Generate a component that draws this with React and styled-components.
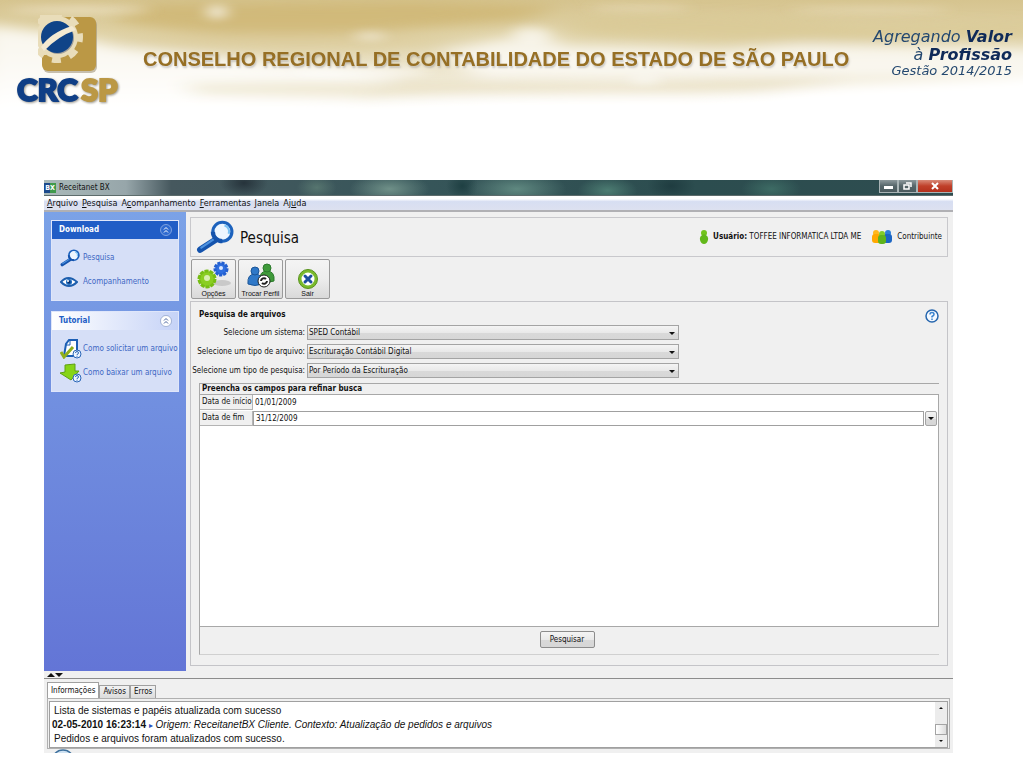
import React, { useState } from 'react'
import styled, { createGlobalStyle, css } from 'styled-components'

const GlobalStyle = createGlobalStyle`
*{
    box-sizing:border-box;
}
body{
    margin:0;
    background:white;
    color:#111;
    font-family:"DejaVu Sans Condensed", Tahoma, "Liberation Sans", sans-serif;
    font-size:8px;
    line-height:12px;
}
button, input, select{
    font:inherit;
    color:inherit;
    margin:0;
    padding:0;
}
a{
    color:inherit;
    text-decoration:none;
}
`

const menus = [
    ['', 'A', 'rquivo'],
    ['', 'P', 'esquisa'],
    ['A', 'c', 'ompanhamento'],
    ['', 'F', 'erramentas'],
    ['', 'J', 'anela'],
    ['Aj', 'u', 'da'],
]

const filters = [
    { id: 'sistema', label: 'Selecione um sistema:', value: 'SPED Contábil' },
    { id: 'tipo-arquivo', label: 'Selecione um tipo de arquivo:', value: 'Escrituração Contábil Digital' },
    { id: 'tipo-pesquisa', label: 'Selecione um tipo de pesquisa:', value: 'Por Período da Escrituração' },
]

const tabs = ['Informações', 'Avisos', 'Erros']

//Banner
const BannerClouds = () => (
    <Clouds viewBox="0 0 1023 120" preserveAspectRatio="none" aria-hidden="true">
        <defs>
            <linearGradient id="sand" x1="0" y1="0" x2="0" y2="1">
                <stop offset="0" stopColor="#d6c48f" />
                <stop offset="0.25" stopColor="#dfd1a4" />
                <stop offset="0.55" stopColor="#ebe3c9" />
                <stop offset="0.8" stopColor="#faf7ee" />
                <stop offset="1" stopColor="#fff" />
            </linearGradient>
            <filter id="soft" x="-20%" y="-60%" width="140%" height="220%">
                <feGaussianBlur stdDeviation="12 6" />
            </filter>
            <filter id="spots" x="-20%" y="-60%" width="140%" height="220%">
                <feGaussianBlur stdDeviation="8 4" />
            </filter>
        </defs>
        <rect width="1023" height="120" fill="url(#sand)" />
        <g filter="url(#soft)">
            <path d="M-20 24 L60 34 L120 48 L210 58 L330 68 L400 78 L300 130 L-20 130Z" fill="#fff" opacity="0.8" />
            <path d="M110 20 Q240 46 400 30 L520 20 L560 6 L420 2 L150 4Z" fill="#cdb26c" opacity="0.7" />
            <path d="M100 36 Q220 56 380 50 L480 40 L400 34 L200 34Z" fill="#dccb98" opacity="0.7" />
            <path d="M440 52 L545 30 L560 46 L640 48 L720 52 L800 44 L1060 50 L1060 76 L480 78Z" fill="#fff" opacity="0.7" />
            <path d="M560 20 Q700 8 860 26 L1060 22 L1060 34 L860 42 Q700 44 590 34Z" fill="#d9c994" opacity="0.7" />
            <path d="M180 84 Q420 78 620 84 Q760 76 850 78 L760 92 Q480 92 360 98 L200 94Z" fill="#e2d5ae" opacity="0.5" />
            <path d="M-20 106 L300 106 L480 98 L700 98 L860 86 L1060 76 L1060 140 L-20 140Z" fill="#fff" />
        </g>
        <g filter="url(#spots)">
            <ellipse cx="80" cy="10" rx="70" ry="3" fill="#f2e9d0" opacity="0.8" />
            <ellipse cx="217" cy="12" rx="10" ry="7" fill="#fff" opacity="0.7" />
            <ellipse cx="370" cy="36" rx="16" ry="4" fill="#fff" opacity="0.5" />
            <ellipse cx="530" cy="34" rx="18" ry="7" fill="#fff" opacity="0.5" />
            <ellipse cx="640" cy="8" rx="50" ry="2" fill="#f2e9d0" opacity="0.7" />
            <ellipse cx="870" cy="10" rx="80" ry="2" fill="#f2e9d0" opacity="0.7" />
            <ellipse cx="360" cy="72" rx="70" ry="4" fill="#fff" opacity="0.7" />
            <ellipse cx="645" cy="80" rx="16" ry="4" fill="#fff" opacity="0.6" />
        </g>
    </Clouds>
)

const CrcLogo = () => (
    <Logo width="108" height="100" viewBox="0 0 108 100" role="img" aria-label="CRCSP">
        <defs>
            <clipPath id="plate"><rect x="22" y="0" width="60" height="58" /></clipPath>
        </defs>
        <rect x="27" y="4" width="54" height="54" rx="6" fill="#8f8263" opacity="0.5" />
        <rect x="26" y="2" width="54" height="54" rx="6" fill="#bb9845" />
        <g clipPath="url(#plate)">
            <circle cx="41" cy="22" r="21" fill="#e9ddba" />
            <circle cx="41" cy="22" r="23" fill="none" stroke="#e9ddba" strokeWidth="6" strokeDasharray="9 9" strokeDashoffset="4" />
            <path d="M24 0 H46 L30 12 V40 H24Z" fill="#e9ddba" />
        </g>
        <circle cx="42" cy="23" r="16" fill="#6f7484" opacity="0.6" />
        <circle cx="41" cy="22" r="16" fill="#0f4488" />
        <path d="M25 32 Q34 18 56 11 L60 15 Q42 21 28 36Z" fill="#f3ead2" />
        <LogoText x="1" y="86" fill="#103f86" stroke="#103f86">CRC</LogoText>
        <LogoText x="65" y="86" fill="#bb9845" stroke="#bb9845">SP</LogoText>
    </Logo>
)

//Icons
const Magnifier = ({ size }) => (
    <svg width={size} height={size} viewBox="0 0 36 32" aria-hidden="true">
        <path d="M18 19 L4 28" stroke="#1453ad" strokeWidth="6" strokeLinecap="round" />
        <path d="M17 18 L5 26" stroke="#4d92e0" strokeWidth="2" strokeLinecap="round" />
        <circle cx="25" cy="11" r="9" fill="#edf6ff" stroke="#1c62bd" strokeWidth="3" />
        <path d="M16 11 A9 9 0 0 0 25 20" fill="none" stroke="#1453ad" strokeWidth="4" />
        <path d="M27 5 A6 6 0 0 1 31 13" fill="none" stroke="#7cc3f5" strokeWidth="2" />
    </svg>
)

const EyeIcon = () => (
    <svg width="18" height="14" viewBox="0 0 18 14" aria-hidden="true">
        <path d="M1 7 Q8 -1 17 7 Q9 15 1 7Z" fill="#fff" stroke="#1e5fae" strokeWidth="2" />
        <circle cx="9" cy="7" r="3" fill="#1e6cc0" />
        <circle cx="9" cy="7" r="1.5" fill="#0c2f66" />
        <circle cx="8" cy="6" r="1" fill="#fff" />
    </svg>
)

const HelpMark = ({ x, y, r }) => (
    <g>
        <circle cx={x} cy={y} r={r} fill="#eef5ff" stroke="#2a66b8" />
        <path d={`M${x - 1.5} ${y - 1} q0 -1.5 1.5 -1.5 t1.5 1.5 q0 1 -1.5 1.5 v0.8 M${x} ${y + 2} v0.8`} fill="none" stroke="#2a66b8" />
    </g>
)

const RequestIcon = () => (
    <svg width="22" height="20" viewBox="0 0 22 20" aria-hidden="true">
        <path d="M9 1 H17 V17 H4 L6 5Z" fill="#fff" stroke="#1d5fb5" strokeWidth="2" />
        <path d="M10 1 V6 H6" fill="none" stroke="#1d5fb5" />
        <path d="M1 13 L4 18 L13 8" fill="none" stroke="#8fae1c" strokeWidth="3" />
        <HelpMark x={17} y={15} r={4} />
    </svg>
)

const DownloadIcon = () => (
    <svg width="22" height="20" viewBox="0 0 22 20" aria-hidden="true">
        <path d="M5 2 L15 1 V8 L19 8 L11 17 L0 10 L5 9Z" fill="#86d416" stroke="#5ea012" />
        <HelpMark x={17} y={15} r={4} />
    </svg>
)

const GearsIcon = () => (
    <svg width="36" height="30" viewBox="0 0 36 30" aria-hidden="true">
        <ellipse cx="26" cy="23" rx="9" ry="3" fill="#c9c9c9" />
        <circle cx="25" cy="9" r="6" fill="#2f6fe0" />
        <circle cx="25" cy="9" r="6" fill="none" stroke="#2460d0" strokeWidth="3" strokeDasharray="3 1" />
        <circle cx="25" cy="8" r="2" fill="#dbe8ff" />
        <circle cx="11" cy="19" r="8" fill="#8ace22" />
        <circle cx="11" cy="19" r="8" fill="none" stroke="#76bd14" strokeWidth="3" strokeDasharray="4 1" />
        <circle cx="11" cy="18" r="3" fill="#d9f0b0" />
    </svg>
)

const Person = ({ x, y, fill, edge }) => (
    <g transform={`translate(${x} ${y})`}>
        <path d="M0 18 Q-1 8 7 8 Q15 8 14 18 Q7 21 0 18Z" fill={fill} stroke={edge} />
        <circle cx="7" cy="5" r="4" fill={fill} stroke={edge} />
    </g>
)

const ProfileIcon = () => (
    <svg width="30" height="28" viewBox="0 0 30 28" aria-hidden="true">
        <Person x={14} y={3} fill="#3f9a3a" edge="#2c7a2c" />
        <Person x={2} y={6} fill="#2f78c8" edge="#1c5698" />
        <circle cx="18" cy="21" r="6" fill="#fff" stroke="#222" />
        <path d="M15 21 a3 3 0 0 1 5 -2 M21 21 a3 3 0 0 1 -5 2" fill="none" stroke="#222" strokeWidth="2" />
    </svg>
)

const ExitIcon = () => (
    <svg width="24" height="29" viewBox="0 0 24 29" aria-hidden="true">
        <circle cx="12" cy="19" r="8" fill="#fff" stroke="#7aba2c" strokeWidth="3" />
        <circle cx="12" cy="19" r="9.5" fill="none" stroke="#57921c" />
        <path d="M9 16 L15 22 M15 16 L9 22" stroke="#1e4f9e" strokeWidth="3" strokeLinecap="round" />
    </svg>
)

const UserIcon = () => (
    <svg width="10" height="14" viewBox="0 0 10 14" aria-hidden="true">
        <circle cx="5" cy="3" r="3" fill="#72c41c" />
        <path d="M5 4 Q10 6 9 10 Q8 14 5 14 Q2 14 1 10 Q0 6 5 4Z" fill="#62b81a" />
    </svg>
)

const GroupIcon = () => (
    <svg width="22" height="14" viewBox="0 0 22 14" aria-hidden="true">
        <circle cx="5" cy="3" r="3" fill="#ffb81c" />
        <rect x="1" y="4" width="9" height="9" rx="3" fill="#ffa800" />
        <circle cx="17" cy="3" r="3" fill="#2d7fd8" />
        <rect x="12" y="4" width="9" height="9" rx="3" fill="#1c66c4" />
        <circle cx="11" cy="4" r="3" fill="#82cc2a" />
        <rect x="7" y="5" width="8" height="9" rx="3" fill="#5fb41c" />
    </svg>
)

const HelpIcon = () => (
    <svg width="14" height="14" viewBox="0 0 14 14" aria-hidden="true">
        <circle cx="7" cy="7" r="6" fill="#f4f9ff" stroke="#2666ae" strokeWidth="1.5" />
        <path d="M5 5.5 q0 -2 2 -2 t2 2 q0 1 -2 2 v1 M7 9.5 v1.5" fill="none" stroke="#3b84d0" strokeWidth="1.5" />
    </svg>
)

const Chevrons = ({ color, ring }) => (
    <svg width="12" height="12" viewBox="0 0 12 12" aria-hidden="true">
        <circle cx="6" cy="6" r="5.5" fill={ring} stroke={color} strokeOpacity="0.4" />
        <path d="M4 5.5 L6 3.5 L8 5.5 M4 8.5 L6 6.5 L8 8.5" fill="none" stroke={color} />
    </svg>
)

const Triangle = ({ up, size = 6 }) => (
    <svg width={size} height={size / 2} viewBox="0 0 6 3" aria-hidden="true">
        <path d={up ? 'M0 3 L3 0 L6 3Z' : 'M0 0 L3 3 L6 0Z'} fill="#111" />
    </svg>
)

const SidePanel = ({ title, dark, children }) => {
    const [open, setOpen] = useState(true)
    return (
        <Panel>
            <PanelHead $dark={dark} onClick={() => setOpen(!open)} aria-expanded={open}>
                {title}
                <Chevrons color={dark ? '#fff' : '#49639c'} ring={dark ? '#2f6ad0' : '#fff'} />
            </PanelHead>
            {open && <PanelBody>{children}</PanelBody>}
        </Panel>
    )
}

const App = () => {
    const [tab, setTab] = useState(tabs[0])
    const [start, setStart] = useState('01/01/2009')
    const [end, setEnd] = useState('31/12/2009')

    return (
        <>
            <GlobalStyle />
            <Banner>
                <BannerClouds />
                <CrcLogo />
                <BannerTitle>CONSELHO REGIONAL DE CONTABILIDADE DO ESTADO DE SÃO PAULO</BannerTitle>
                <Slogan>
                    <p>Agregando <b>Valor</b></p>
                    <p>à <b>Profissão</b></p>
                    <SloganTerm>Gestão 2014/2015</SloganTerm>
                </Slogan>
            </Banner>
            <Window>
                <TitleBar>
                    <AppBadge>BX</AppBadge>
                    <AppName>Receitanet BX</AppName>
                    <WindowButton aria-label="Minimizar">
                        <svg width="9" height="8" viewBox="0 0 9 8"><rect x="0" y="4" width="9" height="3" fill="#fff" /></svg>
                    </WindowButton>
                    <WindowButton aria-label="Restaurar">
                        <svg width="9" height="8" viewBox="0 0 9 8"><path d="M3 1h5v4M1 3h5v4h-5z" fill="none" stroke="#fff" strokeWidth="1.5" /></svg>
                    </WindowButton>
                    <WindowButton aria-label="Fechar" $close>
                        <svg width="8" height="8" viewBox="0 0 8 8"><path d="M1 1L7 7M7 1L1 7" stroke="#fff" strokeWidth="2" /></svg>
                    </WindowButton>
                </TitleBar>
                <MenuBar>
                    {menus.map(([before, key, after]) => (
                        <MenuItem key={before + key + after}>{before}<u>{key}</u>{after}</MenuItem>
                    ))}
                </MenuBar>
                <Body>
                    <Sidebar>
                        <SidePanel title="Download" dark>
                            <SideLink href="#pesquisa"><Magnifier size={20} />Pesquisa</SideLink>
                            <SideLink href="#acompanhamento"><EyeIcon />Acompanhamento</SideLink>
                        </SidePanel>
                        <SidePanel title="Tutorial">
                            <SideLink href="#solicitar"><RequestIcon />Como solicitar um arquivo</SideLink>
                            <SideLink href="#baixar"><DownloadIcon />Como baixar um arquivo</SideLink>
                        </SidePanel>
                    </Sidebar>
                    <Main>
                        <Header>
                            <Magnifier size={38} />
                            <h1>Pesquisa</h1>
                            <UserIcon />
                            <UserName><b>Usuário:</b> TOFFEE INFORMATICA LTDA ME</UserName>
                            <GroupIcon />
                            <span>Contribuinte</span>
                        </Header>
                        <Toolbar>
                            <ToolButton><GearsIcon />Opções</ToolButton>
                            <ToolButton><ProfileIcon />Trocar Perfil</ToolButton>
                            <ToolButton><ExitIcon />Sair</ToolButton>
                        </Toolbar>
                        <SearchPanel>
                            <SearchHead>
                                <h2>Pesquisa de arquivos</h2>
                                <HelpButton aria-label="Ajuda"><HelpIcon /></HelpButton>
                            </SearchHead>
                            <Filters>
                                {filters.map(({ id, label, value }) => (
                                    <React.Fragment key={id}>
                                        <label htmlFor={id}>{label}</label>
                                        <SelectBox>
                                            <select id={id} defaultValue={value}>
                                                <option>{value}</option>
                                            </select>
                                            <Triangle />
                                        </SelectBox>
                                    </React.Fragment>
                                ))}
                            </Filters>
                            <Refine>
                                <h2>Preencha os campos para refinar busca</h2>
                                <Fields>
                                    <FieldRow>
                                        <label htmlFor="inicio">Data de início</label>
                                        <input id="inicio" value={start} onChange={(e) => setStart(e.target.value)} />
                                    </FieldRow>
                                    <FieldRow $boxed>
                                        <label htmlFor="fim">Data de fim</label>
                                        <input id="fim" value={end} onChange={(e) => setEnd(e.target.value)} />
                                        <DateButton aria-label="Abrir calendário"><Triangle /></DateButton>
                                    </FieldRow>
                                </Fields>
                                <Actions>
                                    <SubmitButton>Pesquisar</SubmitButton>
                                </Actions>
                            </Refine>
                        </SearchPanel>
                    </Main>
                </Body>
                <Splitter><Triangle up size={8} /><Triangle size={8} /></Splitter>
                <Messages>
                    <Tabs role="tablist">
                        {tabs.map((name) => (
                            <Tab key={name} role="tab" aria-selected={tab === name} $active={tab === name} onClick={() => setTab(name)}>
                                {name}
                            </Tab>
                        ))}
                    </Tabs>
                    <LogFrame>
                        <LogBox>
                            <Log>
                                <LogMessage>Lista de sistemas e papéis atualizada com sucesso</LogMessage>
                                <p><b>02-05-2010 16:23:14</b> <Mark>▸</Mark> <i>Origem: ReceitanetBX Cliente. Contexto: Atualização de pedidos e arquivos</i></p>
                                <LogMessage>Pedidos e arquivos foram atualizados com sucesso.</LogMessage>
                            </Log>
                            <ScrollBar>
                                <ScrollArrow aria-label="Rolar para cima"><Triangle up size={4} /></ScrollArrow>
                                <ScrollThumb />
                                <ScrollArrow aria-label="Rolar para baixo"><Triangle size={4} /></ScrollArrow>
                            </ScrollBar>
                        </LogBox>
                    </LogFrame>
                </Messages>
                <StatusBar>
                    <svg width="24" height="24" viewBox="0 0 24 24" aria-hidden="true">
                        <circle cx="12" cy="12" r="11" fill="#cfe2f2" stroke="#3c6f9c" strokeWidth="1.5" />
                    </svg>
                </StatusBar>
            </Window>
        </>
    )
}

const raised = css`
border:1px solid #a4a4a4;
background:linear-gradient(#f4f4f4, #e9e9e9 50%, #d9d9d9 52%, #d6d6d6);
`

const Banner = styled.header`
position:relative;
display:flex;
align-items:flex-start;
height:120px;
padding:15px 11px 0 16px;
`
const Clouds = styled.svg`
position:absolute;
inset:0;
z-index:-1;
width:100%;
height:100%;
`
const Logo = styled.svg`
flex:none;
`
const LogoText = styled.text`
font-family:Lato, "Liberation Sans", sans-serif;
font-weight:900;
font-size:31px;
stroke-width:2;
filter:drop-shadow(1px 1px 1px rgba(90,85,70,0.6));
`
const BannerTitle = styled.h1`
flex:1;
margin:32px 0 0 19px;
font-family:"Liberation Sans", sans-serif;
font-size:20px;
line-height:24px;
font-weight:bold;
color:#966f24;
text-shadow:1px 2px 2px rgba(120,120,130,0.35);
white-space:nowrap;
`
const Slogan = styled.div`
margin-top:13px;
text-align:right;
font-family:"DejaVu Sans", Verdana, sans-serif;
font-style:italic;
font-size:16px;
line-height:18px;
color:#24486f;
white-space:nowrap;
p{
    margin:0;
}
b{
    color:#0f2a58;
}
`
const SloganTerm = styled.p`
font-size:13px;
line-height:14px;
`
const Window = styled.div`
margin:60px 70px 15px 44px;
background:#f0f0f0;
`
const TitleBar = styled.div`
display:flex;
align-items:stretch;
height:16px;
border-bottom:1px solid #5d6c6c;
background:
    radial-gradient(ellipse 40px 16px at 38% 60%, #6f9088, transparent),
    radial-gradient(ellipse 50px 18px at 52% 60%, #5f8880, transparent),
    radial-gradient(ellipse 24px 14px at 22% 20%, #26333b, transparent),
    radial-gradient(ellipse 16px 14px at 46% 40%, #1e3f42, transparent),
    radial-gradient(ellipse 30px 14px at 62% 70%, #4c7c72, transparent),
    radial-gradient(ellipse 24px 14px at 69% 40%, #1f3c40, transparent),
    radial-gradient(ellipse 30px 14px at 80% 60%, #3d6b64, transparent),
    radial-gradient(ellipse 20px 12px at 30% 50%, #56756f, transparent),
    linear-gradient(90deg, #a9b9b9, #97a6aa 9%, #46585e 14%, #37565a 40%, #2c4d4f 70%, #2e4d50);
`
const AppBadge = styled.span`
align-self:center;
width:12px;
background:linear-gradient(90deg, #1c4a8c 50%, #3f9a4c 50%);
color:white;
font-size:7px;
line-height:10px;
font-weight:bold;
text-align:center;
`
const AppName = styled.span`
flex:1;
padding-left:3px;
line-height:16px;
`
const WindowButton = styled.button`
display:flex;
align-items:center;
justify-content:center;
width:${({ $close }) => $close ? '36px' : '19px'};
height:13px;
border:1px solid #a9b4b6;
border-top:0;
background:${({ $close }) => $close ? 'linear-gradient(#d98a78, #c0402a 50%, #b3301c)' : 'linear-gradient(#8d999c, #56666a 50%, #4a5a5e)'};
`
const MenuBar = styled.nav`
display:flex;
gap:4px;
height:16px;
padding:0 3px;
border-bottom:2px solid #b0b0b4;
background:linear-gradient(#fff 20%, #d7def2 40%, #dde1f0);
`
const MenuItem = styled.button`
border:0;
background:none;
font-size:9px;
line-height:14px;
`
const Body = styled.div`
display:flex;
gap:4px;
`
const Sidebar = styled.aside`
display:flex;
flex-direction:column;
gap:10px;
flex:none;
width:142px;
padding:8px 7px;
background:linear-gradient(#7ba2e7, #6375d6);
`
const Panel = styled.section`
border:1px solid #dfe6fa;
background:#d6dff7;
`
const PanelHead = styled.button`
display:flex;
align-items:center;
justify-content:space-between;
width:100%;
height:18px;
padding:0 6px 0 7px;
border:0;
font-weight:bold;
color:${({ $dark }) => $dark ? 'white' : '#215dc6'};
background:${({ $dark }) => $dark ? '#215dc6' : 'linear-gradient(90deg, #fff, #c6d3f7)'};
`
const PanelBody = styled.div`
display:flex;
flex-direction:column;
gap:2px;
padding:8px 0 7px 8px;
`
const SideLink = styled.a`
display:grid;
grid-template-columns:22px 1fr;
align-items:center;
justify-items:start;
gap:1px;
height:22px;
color:#3e68c4;
white-space:nowrap;
`
const Main = styled.main`
flex:1;
min-width:0;
padding:5px 5px 5px 0;
`
const Header = styled.div`
display:flex;
align-items:center;
gap:4px;
height:40px;
padding:0 5px;
border:1px solid #c8c8cc;
h1{
    flex:1;
    margin:2px 0 0 2px;
    font-size:15px;
    line-height:20px;
    font-weight:normal;
}
`
const UserName = styled.span`
margin-right:6px;
`
const Toolbar = styled.div`
display:flex;
gap:2px;
padding:2px 1px;
`
const ToolButton = styled.button`
display:flex;
flex-direction:column;
align-items:center;
justify-content:space-between;
width:45px;
height:40px;
border:1px solid #9a9a9a;
border-radius:2px;
background:linear-gradient(#f4f4f4, #ececec 50%, #d9d9d9);
font-family:"Liberation Sans", sans-serif;
font-size:7px;
line-height:8px;
white-space:nowrap;
`
const SearchPanel = styled.section`
padding:7px 8px 10px;
border:1px solid #c4c4c8;
h2{
    margin:0;
    font-size:8px;
    line-height:12px;
}
`
const SearchHead = styled.div`
display:flex;
justify-content:space-between;
height:16px;
`
const HelpButton = styled.button`
display:flex;
border:0;
background:none;
`
const Filters = styled.div`
display:grid;
grid-template-columns:106px 372px;
align-items:center;
gap:4px 2px;
label{
    justify-self:end;
    white-space:nowrap;
}
`
const SelectBox = styled.div`
position:relative;
select{
    ${raised}
    display:block;
    width:100%;
    height:15px;
    padding-left:1px;
    appearance:none;
    border-radius:0;
}
svg{
    position:absolute;
    right:4px;
    top:7px;
    pointer-events:none;
}
`
const Refine = styled.div`
margin-top:5px;
border-top:1px solid #a8a8a8;
border-left:1px solid #a8a8a8;
border-bottom:1px solid #d0d0d0;
h2{
    padding-left:2px;
    line-height:10px;
}
`
const Fields = styled.div`
min-height:233px;
border:1px solid #a8a8a8;
border-left:0;
background:white;
`
const FieldRow = styled.div`
display:flex;
align-items:stretch;
height:15px;
margin-bottom:1px;
label{
    flex:none;
    width:53px;
    padding-left:2px;
    border:solid #b4b4b4;
    border-width:0 1px 1px 0;
    background:#f0f0f0;
    line-height:14px;
    white-space:nowrap;
}
input{
    flex:1;
    min-width:0;
    padding-left:2px;
    border:${({ $boxed }) => $boxed ? '1px solid #a0a0a0' : '0'};
    background:white;
}
`
const DateButton = styled.button`
${raised}
display:flex;
align-items:center;
justify-content:center;
width:12px;
margin:0 1px;
border-radius:2px;
`
const Actions = styled.div`
display:flex;
justify-content:center;
padding:4px 5px 6px 0;
`
const SubmitButton = styled.button`
${raised}
width:55px;
height:17px;
border-color:#8c8c8c;
border-radius:2px;
`
const Splitter = styled.div`
display:flex;
align-items:center;
height:8px;
padding-left:3px;
border-bottom:1px solid #8c8c8c;
`
const Messages = styled.section`
padding:3px 3px 0;
`
const Tabs = styled.div`
display:flex;
align-items:flex-end;
`
const Tab = styled.button`
height:${({ $active }) => $active ? '16px' : '13px'};
padding:0 3px;
border:1px solid #a0a0a0;
border-bottom:0;
line-height:12px;
background:${({ $active }) => $active ? 'white' : 'linear-gradient(#f2f2f2, #dcdcdc)'};
`
const LogFrame = styled.div`
padding:2px 1px 0;
border:1px solid #b0b0b0;
`
const LogBox = styled.div`
display:flex;
height:47px;
border:1px solid #a0a0a0;
background:white;
`
const Log = styled.div`
flex:1;
min-width:0;
padding:2px 0 0 2px;
font-family:"Liberation Sans", sans-serif;
font-size:10px;
line-height:14px;
white-space:nowrap;
p{
    margin:0;
}
`
const LogMessage = styled.p`
text-indent:2px;
`
const Mark = styled.span`
color:#2a4fc0;
font-size:8px;
line-height:8px;
`
const ScrollBar = styled.div`
display:flex;
flex-direction:column;
width:12px;
background:#ececec;
`
const ScrollArrow = styled.button`
display:flex;
align-items:center;
justify-content:center;
height:12px;
border:0;
background:none;
`
const ScrollThumb = styled.div`
height:11px;
margin-top:auto;
border:1px solid #a4a4a4;
background:linear-gradient(90deg, #fff, #dcdcdc);
`
const StatusBar = styled.footer`
display:flex;
align-items:flex-start;
height:4px;
padding-left:7px;
overflow:hidden;
`

export default App
